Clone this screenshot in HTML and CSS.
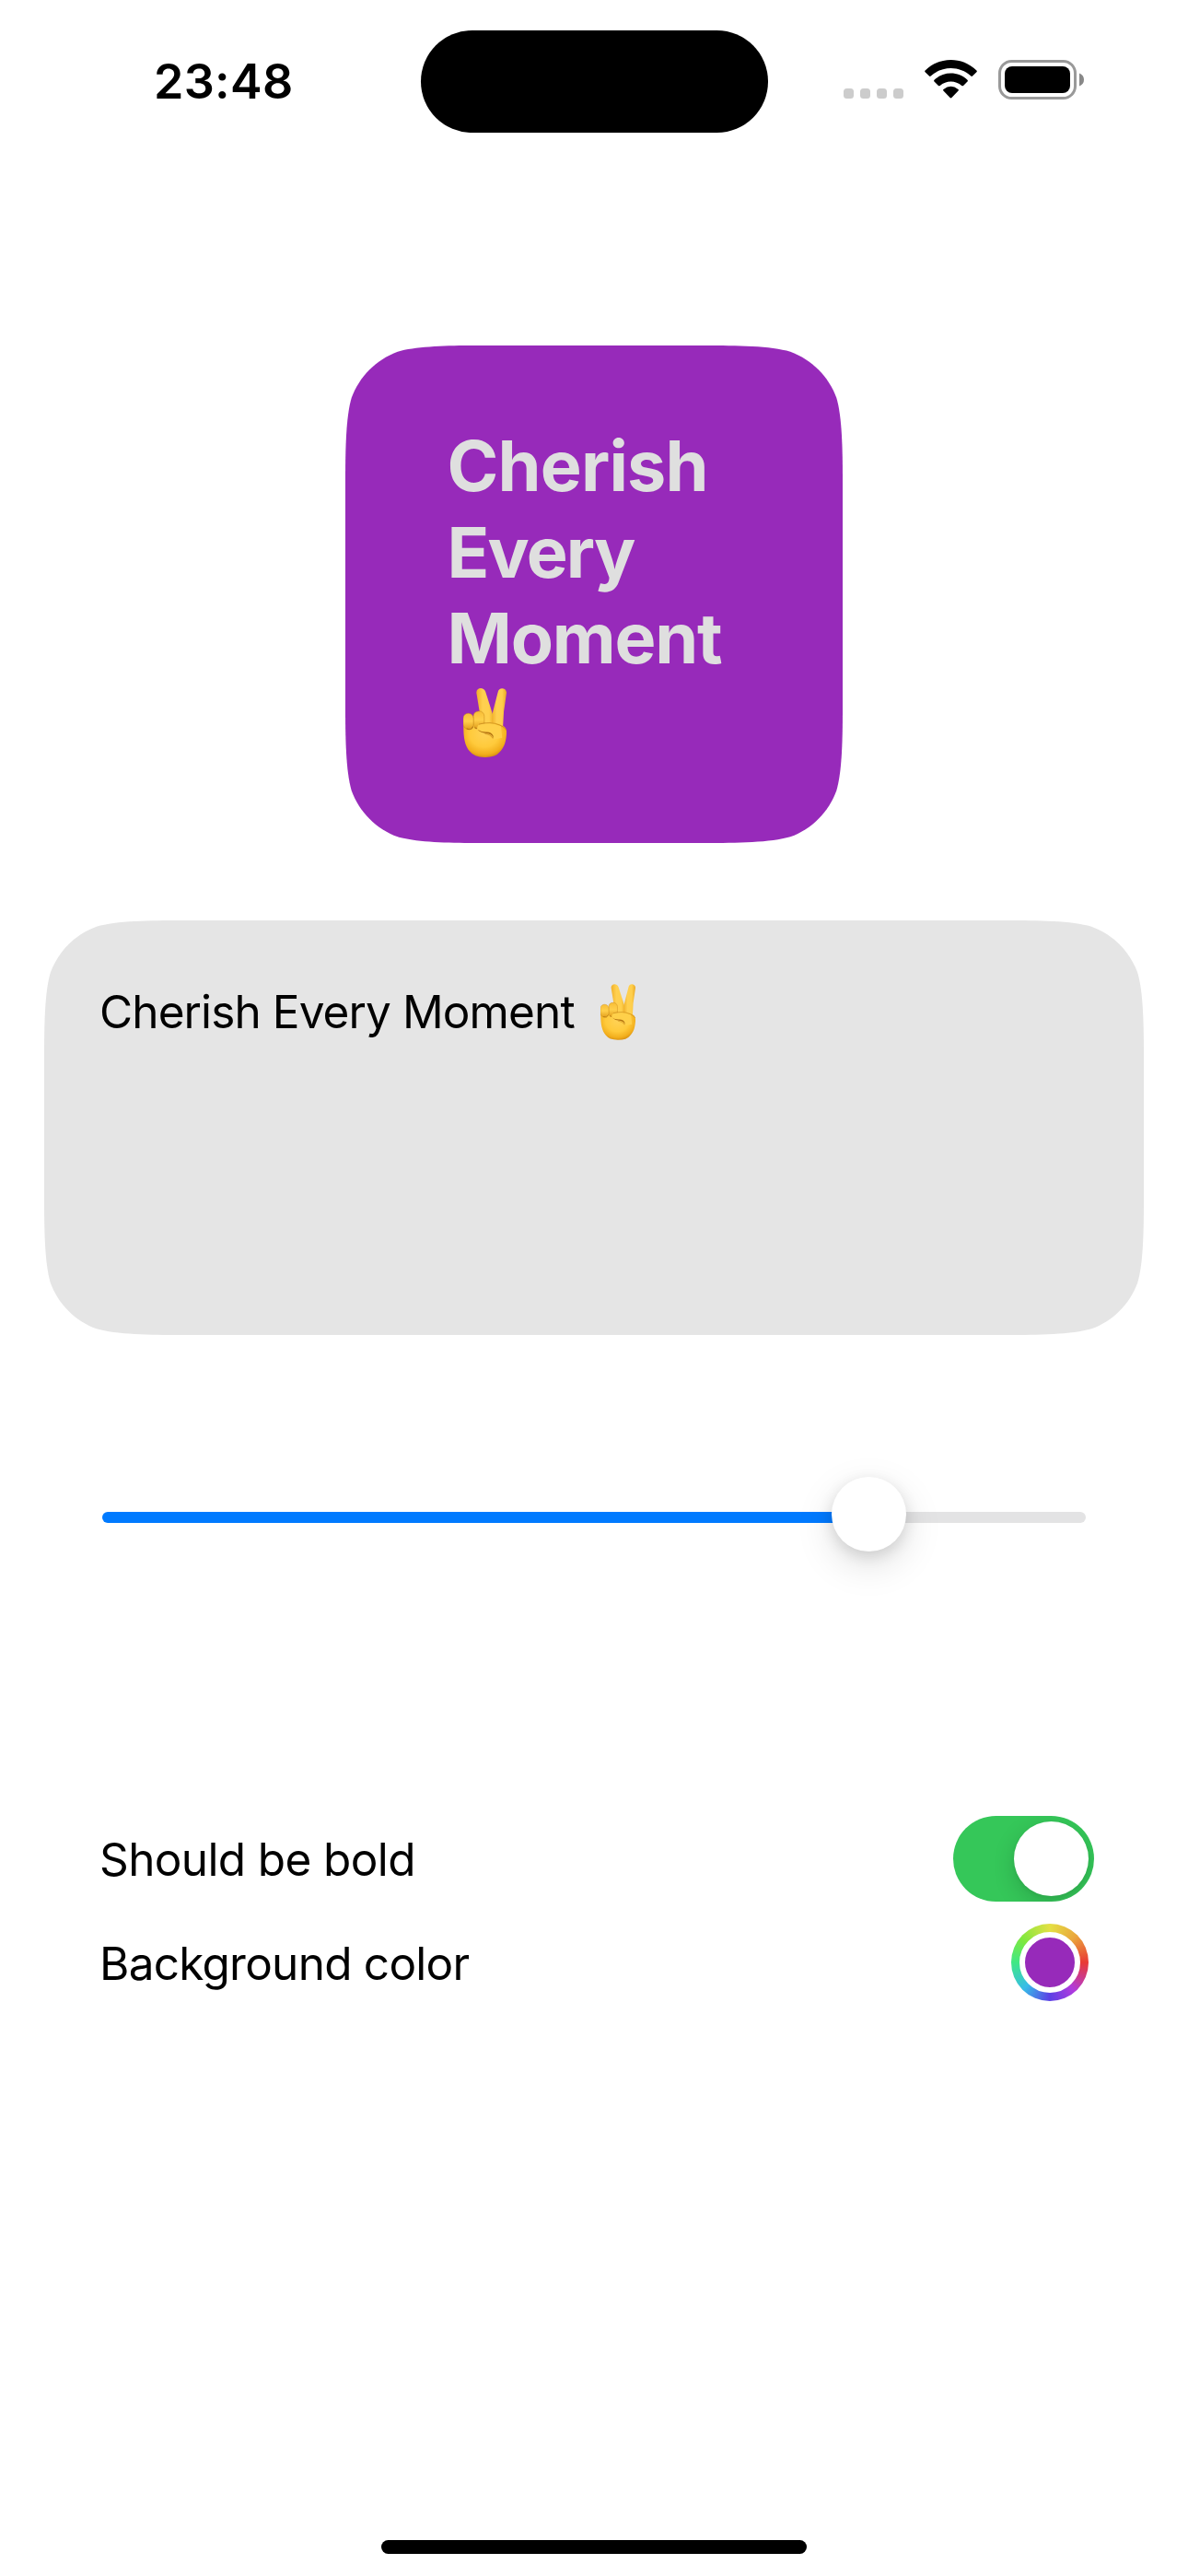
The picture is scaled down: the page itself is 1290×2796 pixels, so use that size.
FILE: index.html
```
<!DOCTYPE html>
<html lang="en">
<head>
<meta charset="utf-8">
<title>Widget editor</title>
<link rel="stylesheet" href="styles.css">
</head>
<body>
<svg class="defs" width="0" height="0" aria-hidden="true">
  <defs>
    <radialGradient id="palm" cx=".48" cy=".4" r=".62">
      <stop offset="0" stop-color="#ffd257"/><stop offset=".55" stop-color="#ffca3b"/><stop offset=".85" stop-color="#f2ae1c"/><stop offset="1" stop-color="#d58d10"/>
    </radialGradient>
    <linearGradient id="finger" x1="0" x2="1" y1="0" y2="0">
      <stop offset="0" stop-color="#f0b02a"/><stop offset=".35" stop-color="#ffd050"/><stop offset=".7" stop-color="#ffcf4c"/><stop offset="1" stop-color="#eaa823"/>
    </linearGradient>
    <linearGradient id="curl" x1="0" x2="0" y1="0" y2="1">
      <stop offset="0" stop-color="#f8be37"/><stop offset=".5" stop-color="#ffcf4b"/><stop offset="1" stop-color="#e3a01e"/>
    </linearGradient>
    <symbol id="victory" viewBox="0 0 140 223">
      <path fill="url(#finger)" d="M43 16C40-3 66-6 72 11L96 86 101 126 60 120Z"/>
      <path fill="url(#finger)" d="M112 13C115-6 141-2 140 15L135 50Q130 76 130 98L128 132 92 122 94 83Z"/>
      <path fill="url(#palm)" d="M1 112Q3 96 32 94L62 112Q105 108 128 121Q142 127 140 148C138 172 134 190 118 206Q105 223 72 223Q36 224 21 204C4 184 0 156 1 112Z"/>
      <rect x="33" y="74" width="35" height="56" rx="16" fill="url(#curl)" stroke="#c98919" stroke-width="1.6"/>
      <rect x="0" y="81" width="33" height="51" rx="16" fill="url(#curl)" stroke="#c98919" stroke-width="1.4"/>
      <path fill="none" stroke="#a96b10" stroke-width="3" stroke-linecap="round" opacity=".8" d="M12 131Q25 137 32 124M37 127Q42 132 47 129"/>
      <path fill="#ffd04a" d="M58 115Q88 110 122 122L126 160 98 166Q96 148 76 145Q50 141 45 131Q44 118 58 115Z"/>
      <path fill="none" stroke="#bd7e17" stroke-width="2" stroke-linecap="round" d="M52 116Q88 106 118 119Q132 124 139 134"/>
      <path fill="#b47412" d="M46 133Q56 144 75 146Q93 148 97 161Q98 158 97 153Q91 141 77 141Q58 142 46 133Z"/>
      <path fill="none" stroke="#c88717" stroke-width="3" stroke-linecap="round" opacity=".65" d="M71 147Q88 148 96 161"/>
    </symbol>
  </defs>
</svg>

<div class="screen">
  <header class="status">
    <div class="side"><span class="time">23:48</span></div>
    <div class="island"></div>
    <div class="side icons">
      <svg class="dots" viewBox="0 0 65 11"><g fill="#ccc"><rect width="11" height="11" rx="3.5"/><rect x="18" width="11" height="11" rx="3.5"/><rect x="36" width="11" height="11" rx="3.5"/><rect x="54" width="11" height="11" rx="3.5"/></g></svg>
      <svg class="wifi" viewBox="0 0 57 42">
        <path d="M.6 13.2Q-.3 12.3.6 11.4C16.5-3.8 40.5-3.8 56.4 11.4Q57.3 12.3 56.4 13.2L52 17.6Q51.2 18.4 50.3 17.6C38 6.100 19 6.100 6.700 17.600Q5.800 18.400 5 17.600Z"/>
        <path d="M10.500 23.500Q9.700 22.700 10.500 21.800C20.500 12.200 36.500 12.200 46.500 21.800Q47.300 22.700 46.500 23.500L42 27.900Q41.200 28.700 40.300 27.900C33.700 21.900 23.300 21.900 16.700 27.900Q15.800 28.700 15 27.900Z"/>
        <path d="M20.400 33.600Q19.500 32.700 20.500 31.900Q28.500 25.800 36.500 31.900Q37.500 32.700 36.600 33.600L29.400 41.100Q28.500 42 27.600 41.100Z"/>
      </svg>
      <svg class="battery" viewBox="0 0 93 43">
        <rect x="1.500" y="1.500" width="82" height="40" rx="13" fill="none" stroke="#999" stroke-width="3"/>
        <rect x="7" y="7" width="71" height="29" rx="8"/>
        <path fill="#888" d="M88 14.500Q93 16.500 93 21.500Q93 26.500 88 28.500Z"/>
      </svg>
    </div>
  </header>

  <main>
    <section class="card">
      <p class="quote"><span class="loose">Cherish</span><br><span class="tight">Every</span><br>Moment<br><svg class="hand" role="img" aria-label="✌️"><use href="#victory"/></svg></p>
    </section>

    <section class="editor">
      <p>Cherish Every Moment</p><svg class="hand" role="img" aria-label="✌️"><use href="#victory"/></svg>
    </section>

    <div class="slider">
      <div class="fill"></div><div class="thumb"></div><div class="rest"></div>
    </div>

    <div class="row bold-row"><span>Should be bold</span><div class="toggle"><div class="knob"></div></div></div>
    <div class="row color-row"><span>Background color</span><div class="wheel"><div class="swatch"></div></div></div>
  </main>
  <div class="home"></div>
</div>
</body>
</html>
```
FILE: styles.css
```
* { box-sizing: border-box; }
body { margin: 0; background: #fff; color: #000; font-family: Inter, "Liberation Sans", sans-serif; }
p { margin: 0; }
svg { display: block; }
.defs { position: absolute; }
.screen { width: 1290px; height: 2796px; display: flex; flex-direction: column; align-items: center; overflow: hidden; }

.status { width: 100%; height: 177px; padding-top: 33px; display: flex; align-items: flex-start; }
.side { width: 456.5px; height: 111px; flex: none; }
.time { display: block; padding: 24px 0 0 167px; font-size: 52px; line-height: 64px; font-weight: 570; letter-spacing: .3px; }
.island { width: 377px; height: 111px; border-radius: 56px; background: #000; }
.icons { display: flex; padding: 32px 0 0 82.5px; }
.dots { width: 65px; height: 11px; margin: 31px 23px 0 0; }
.wifi { width: 57px; height: 42px; margin-right: 23px; }
.battery { width: 93px; height: 43px; }

main { width: 1194px; flex: 1; display: flex; flex-direction: column; }

.card {
  width: 540px; height: 540px; margin: 198px auto 0; padding: 84px 0 0 110.5px; background: #972aba;
  clip-path: path("M150 0H390C425 0 462 .4 483.170 6.740C506.450 15.220 524.780 33.550 533.260 56.830C539.600 78 540 115 540 150V390C540 425 539.600 462 533.260 483.170C524.780 506.450 506.450 524.780 483.170 533.260C462 539.600 425 540 390 540H150C115 540 78 539.600 56.830 533.260C33.550 524.780 15.220 506.450 6.740 483.170C.4 462 0 425 0 390V150C0 115 .4 78 6.740 56.830C15.220 33.550 33.550 15.220 56.830 6.740C78 .4 115 0 150 0Z");
}
.quote { color: #dfdfdf; font-size: 75.5px; line-height: 93.5px; font-weight: 700; letter-spacing: -1.2px; }
.loose { letter-spacing: -.8px; }
.tight { letter-spacing: -1.8px; }
.quote .hand { width: 47px; height: 75px; margin: 7px 0 0 17.5px; }

.editor {
  height: 450px; margin-top: 84px; padding: 69px 0 0 60px; background: #e5e5e5; display: flex; align-items: flex-start;
  font-size: 49.500px; line-height: 60px; letter-spacing: -.9px;
  clip-path: path("M150 0H1044C1079 0 1116 .4 1137.170 6.740C1160.450 15.220 1178.780 33.550 1187.260 56.830C1193.600 78 1194 115 1194 150V300C1194 335 1193.600 372 1187.260 393.170C1178.780 416.450 1160.450 434.780 1137.170 443.260C1116 449.600 1079 450 1044 450H150C115 450 78 449.600 56.830 443.260C33.550 434.780 15.220 416.450 6.740 393.170C.4 372 0 335 0 300V150C0 115 .4 78 6.740 56.830C15.220 33.550 33.550 15.220 56.830 6.740C78 .4 115 0 150 0Z");
}
.editor p { width: 544px; white-space: nowrap; }
.editor .hand { width: 38px; height: 61px; }

.slider { height: 87px; margin: 153px 63px 0; display: flex; align-items: flex-start; }
.fill, .rest { height: 12px; margin-top: 39px; }
.fill { width: 800px; margin-right: -8px; background: #007aff; border-radius: 6px 0 0 6px; }
.thumb { width: 81px; height: 81px; margin-top: 1px; border-radius: 50%; background: #fff; box-shadow: 0 14px 42px rgba(0,0,0,.13), 0 5px 16px rgba(0,0,0,.12); z-index: 1; }
.rest { flex: 1; margin-left: -8px; background: #e3e3e4; border-radius: 0 6px 6px 0; }

.row { display: flex; justify-content: space-between; padding-left: 60px; font-size: 49.500px; line-height: 60px; letter-spacing: -.75px; }
.bold-row { height: 93px; margin-top: 282px; padding-right: 54px; letter-spacing: -.62px; }
.bold-row span { padding-top: 17px; }
.toggle { width: 153px; height: 93px; border-radius: 47px; background: #35c759; padding: 6px; display: flex; justify-content: flex-end; overflow: hidden; }
.knob { width: 81px; height: 81px; border-radius: 50%; background: #fff; box-shadow: 0 8px 24px rgba(0,0,0,.16), 0 2px 4px rgba(0,0,0,.05); }
.color-row { margin-top: 24px; padding-right: 60px; }
.color-row span { padding-top: 13px; }
.wheel { width: 84px; height: 84px; padding: 9px; border-radius: 50%; background: conic-gradient(#e4e044, #eaa53c 45deg, #e93a35 90deg, #b03ade 140deg, #5b40e5 180deg, #36bde8 225deg, #40e884 270deg, #7fe83e 310deg, #e4e044); }
.swatch { width: 66px; height: 66px; border: 6px solid #fff; border-radius: 50%; background: #972aba; }

.home { width: 462px; height: 15px; margin-bottom: 24px; border-radius: 8px; background: #000; }
```
